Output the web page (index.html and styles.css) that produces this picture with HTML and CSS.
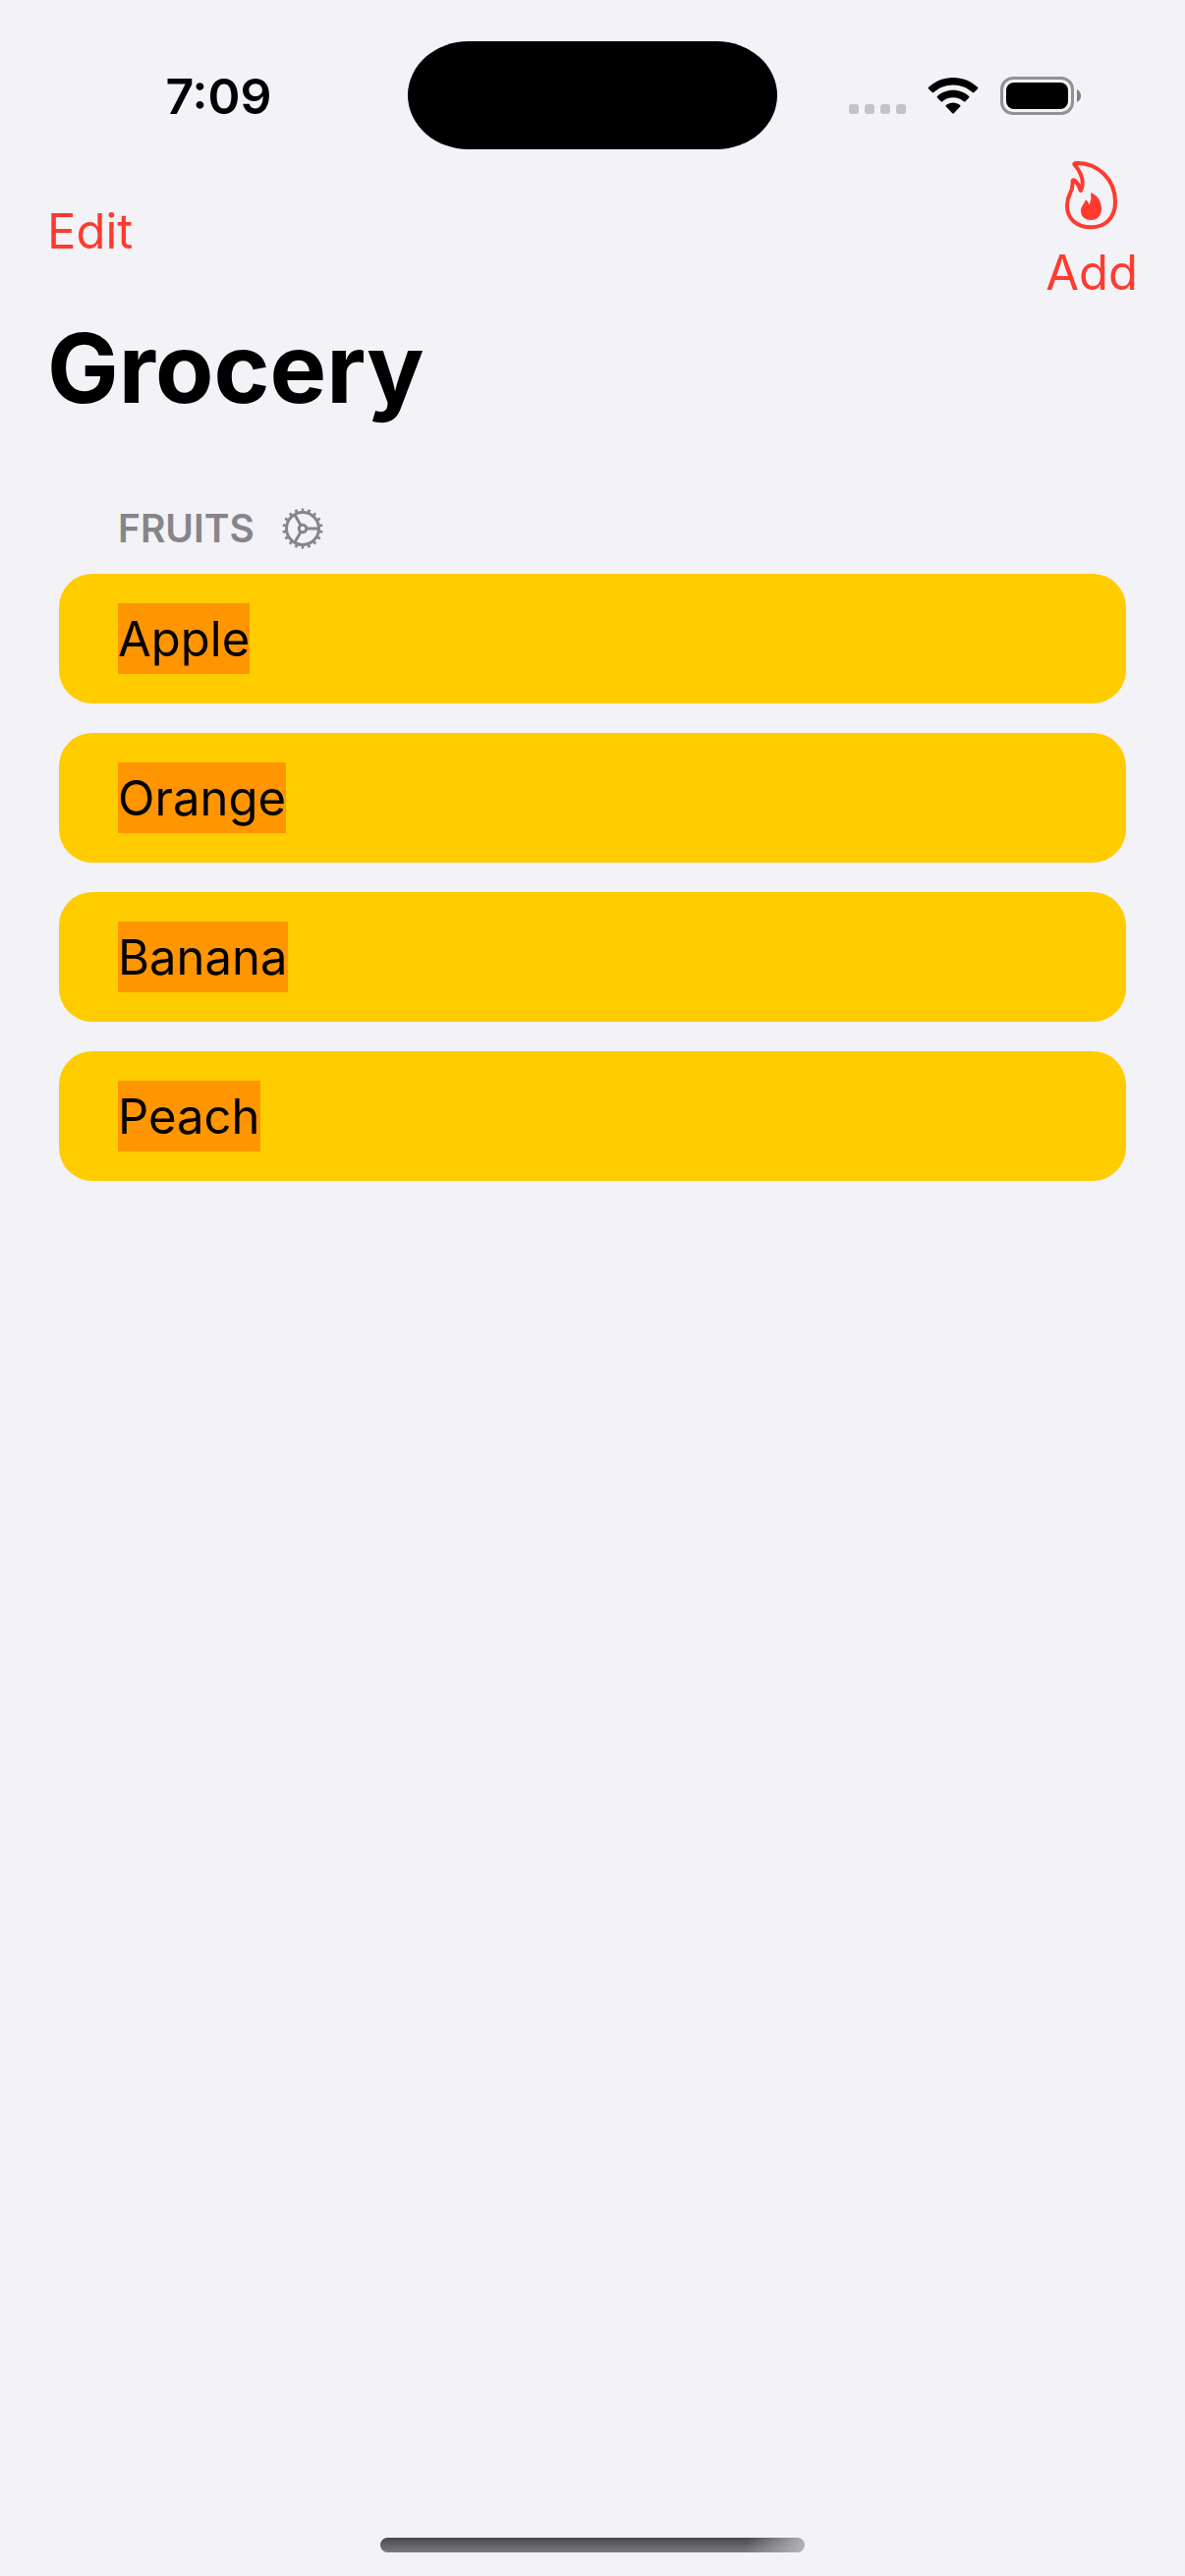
FILE: index.html
```html
<!DOCTYPE html>
<html lang="en">
<head>
<meta charset="utf-8">
<meta name="viewport" content="width=device-width, initial-scale=1">
<title>Grocery</title>
<link rel="stylesheet" href="styles.css">
</head>
<body>
<div class="screen">
  <div class="status-bar">
    <time class="clock">7:09</time>
    <div class="island"></div>
    <div class="status-icons">
      <svg class="signal" viewBox="0 0 58 38" aria-hidden="true">
        <rect x="0" y="28" width="10" height="10" rx="3"/>
        <rect x="16" y="28" width="10" height="10" rx="3"/>
        <rect x="32" y="28" width="10" height="10" rx="3"/>
        <rect x="48" y="28" width="10" height="10" rx="3"/>
      </svg>
      <svg class="wifi" viewBox="0 0 52 38" aria-hidden="true">
        <path d="M26 1C16.300 1 7.500 4.700 1 10.800Q.200 11.600 1 12.400L4.700 16.100Q5.400 16.800 6.200 16.100C11.400 11.300 18.400 8.500 26 8.500S40.600 11.300 45.800 16.100Q46.600 16.800 47.300 16.100L51 12.400Q51.800 11.600 51 10.800C44.500 4.700 35.700 1 26 1Z"/>
        <path d="M26 13.800C19.800 13.800 14.200 16.100 9.900 19.900Q9.100 20.700 9.900 21.500L13.600 25.200Q14.400 25.900 15.200 25.200C18.100 22.800 21.900 21.300 26 21.300S33.900 22.800 36.800 25.200Q37.600 25.900 38.400 25.200L42.100 21.500Q42.900 20.700 42.100 19.900C37.800 16.100 32.200 13.800 26 13.800Z"/>
        <path d="M26 26.500C23.300 26.500 20.900 27.400 18.900 28.900Q18 29.700 18.800 30.500L25.200 37.200Q26 37.900 26.800 37.200L33.200 30.500Q34 29.700 33.100 28.900C31.100 27.400 28.700 26.500 26 26.500Z"/>
      </svg>
      <svg class="battery" viewBox="0 0 82 39" aria-hidden="true">
        <rect class="battery-shell" x="1.500" y="1.500" width="72" height="36" rx="11.500"/>
        <rect x="6" y="6" width="63" height="27" rx="8"/>
        <path class="battery-cap" d="M78 13Q82 15 82 19.500T78 26Z"/>
      </svg>
    </div>
  </div>

  <header class="nav-bar">
    <button class="nav-button" type="button">Edit</button>
    <button class="nav-button nav-add" type="button">
      <svg class="flame" viewBox="0 0 54 70" aria-hidden="true">
        <path class="flame-outline" d="M9.500 3.500C9 2.500 9.700 2 11 2C33 1.500 51 18 51 41.500C51 57.500 41 67.300 26.500 67.300C11.500 67.300 2 58.500 2 45.500C2 33 7.500 33 7.600 23.500C7.600 21.500 7.600 20.800 7.600 20.200C7.900 18.800 9.300 19 10.500 20.300C13 22.700 14.300 25.300 15.200 28.800C15.500 30.300 16 30.300 16.300 29.200C19.700 20.500 16 11 9.500 3.500Z"/>
        <path class="flame-core" d="M26.500 32.200C33 34.800 37 41 37 48.500C37 55.500 32.700 60 26.300 60C20 60 16 56.200 16 50.500C16 46 19 44.500 20.500 40Q21 39 22 40Q24 42 24.300 44.500C26.300 41 26.800 37 26 33Q26 32 26.500 32.200Z"/>
      </svg>
      <span>Add</span>
    </button>
  </header>

  <main class="content">
    <h1 class="title">Grocery</h1>
    <section>
      <h2 class="section-header">
        <span>FRUITS</span>
        <svg class="gear" viewBox="-21 -21 42 42" aria-hidden="true">
          <circle class="gear-teeth" r="18.500" pathLength="360"/>
          <circle class="gear-ring" r="16.500"/>
          <circle class="gear-hub" r="3.800"/>
          <path class="gear-spokes" d="M4 0H16M-2 -3.500L-8 -14M-2 3.500L-8 14"/>
        </svg>
      </h2>
      <ul class="list">
        <li class="row"><span class="label">Apple</span></li>
        <li class="row"><span class="label">Orange</span></li>
        <li class="row"><span class="label">Banana</span></li>
        <li class="row"><span class="label">Peach</span></li>
      </ul>
    </section>
  </main>

  <div class="home-indicator"></div>
</div>
</body>
</html>
```
FILE: styles.css
```css
* {
  box-sizing: border-box;
}

body {
  margin: 0;
  background: #f2f2f7;
  color: #000;
  font-family: Inter, "Liberation Sans", sans-serif;
  font-size: 49px;
  line-height: 60px;
}

.screen {
  display: flex;
  flex-direction: column;
  min-height: 100vh;
}

.status-bar {
  display: grid;
  grid-template-columns: 1fr auto 1fr;
  align-items: center;
  padding-top: 42px;
}

.clock {
  padding: 2px 0 0 30px;
  font-size: 50px;
  font-weight: 600;
  text-align: center;
}

.island {
  width: 376px;
  height: 110px;
  border-radius: 62px / 55px;
  background: #000;
}

.status-icons {
  display: flex;
  justify-content: center;
  gap: 22px;
  padding-right: 34px;
}

.signal {
  width: 58px;
  height: 38px;
  fill: #c3c2c7;
}

.wifi {
  width: 52px;
  height: 38px;
}

.battery {
  width: 82px;
  height: 39px;
}

.battery-shell {
  fill: none;
  stroke: #929195;
  stroke-width: 3;
}

.battery-cap {
  fill: #7f7e82;
}

.nav-bar {
  display: flex;
  align-items: center;
  justify-content: space-between;
  padding: 12px 48px 0;
}

.nav-button {
  padding: 0;
  border: 0;
  background: none;
  color: #ff3b30;
  font: inherit;
}

.nav-add {
  display: flex;
  flex-direction: column;
  align-items: center;
  gap: 14px;
}

.flame {
  width: 54px;
  height: 70px;
}

.flame-outline {
  fill: none;
  stroke: #ff3b30;
  stroke-width: 4;
  stroke-linejoin: round;
}

.flame-core {
  fill: #ff3b30;
}

.content {
  flex: 1;
  padding: 6px 60px 60px;
}

.title {
  margin: 0 -12px;
  font-size: 97px;
  font-weight: 700;
  line-height: 122px;
}

.section-header {
  display: flex;
  align-items: center;
  gap: 28px;
  margin: 72px 0 16px;
  padding: 0 60px;
  color: #86858a;
  font-size: 39px;
  font-weight: 600;
}

.gear {
  width: 42px;
  height: 42px;
  fill: none;
  stroke: currentColor;
}

.gear-teeth {
  stroke-width: 4;
  stroke-dasharray: 8 12;
  stroke-dashoffset: -6;
}

.gear-ring,
.gear-hub,
.gear-spokes {
  stroke-width: 3;
}

.list {
  display: flex;
  flex-direction: column;
  gap: 30px;
  margin: 0;
  padding: 0;
  list-style: none;
}

.row {
  display: flex;
  padding: 30px 60px;
  border-radius: 34px;
  background: #ffcc00;
}

.label {
  padding-top: 2px;
  background: #ff9500;
  line-height: 70px;
}

.home-indicator {
  align-self: center;
  width: 432px;
  height: 15px;
  margin-bottom: 24px;
  border-radius: 8px;
  background:
    linear-gradient(100deg, transparent 86%, #b5b4b8 100%),
    linear-gradient(#48484a, #7b7b7d);
}
```
